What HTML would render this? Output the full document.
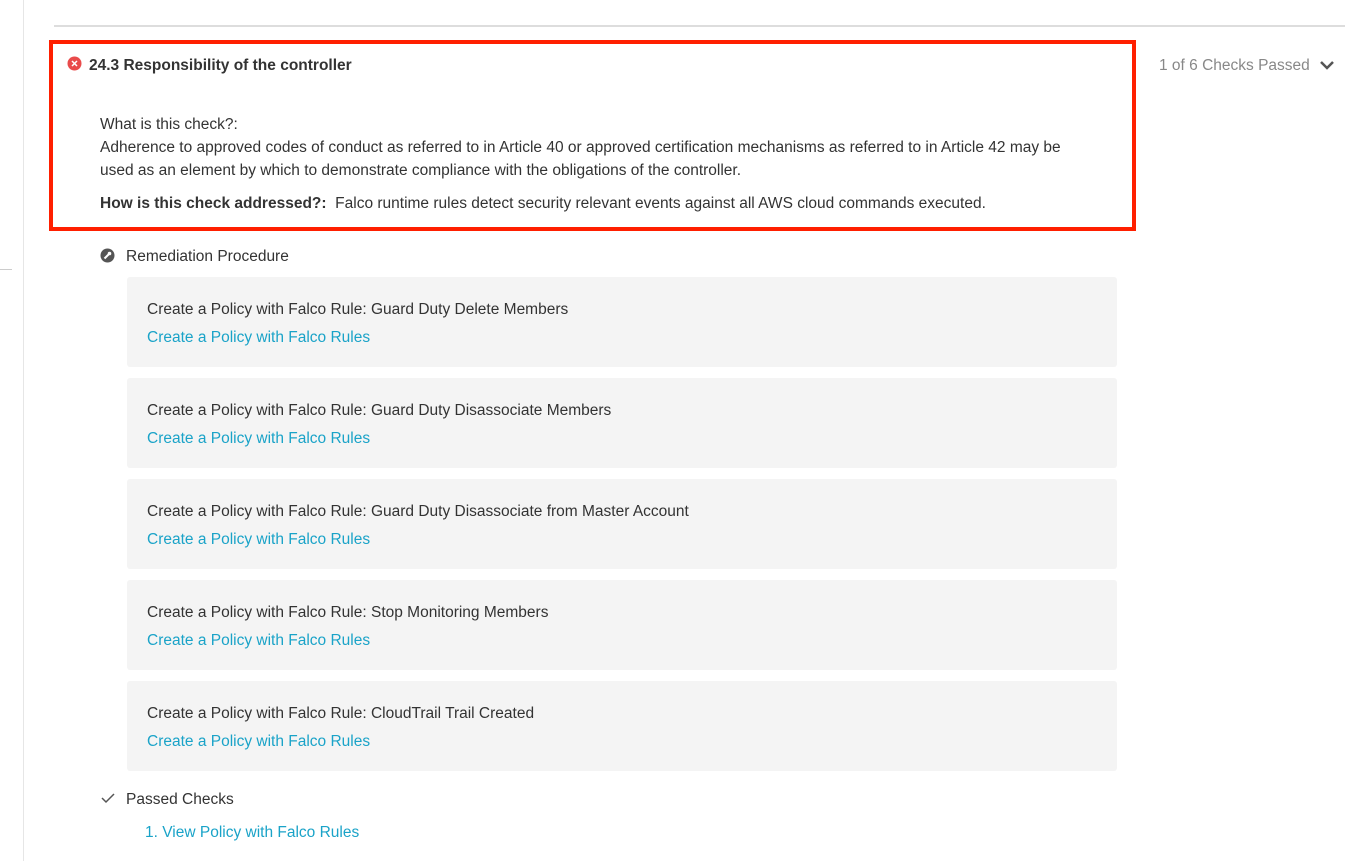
<!DOCTYPE html>
<html><head><style>
body{margin:0;width:1345px;height:861px;background:#fff;font-family:"Liberation Sans",sans-serif;color:#333;position:relative;overflow:hidden;font-size:15.5px}
.a{position:absolute;white-space:nowrap}
.card{position:absolute;left:127px;width:990px;height:90px;background:#f4f4f4;border-radius:3px}
.card .t{position:absolute;left:20px;top:24px;color:#333}
.card .l{position:absolute;left:20px;top:52px;color:#1aa3c8}
</style></head><body>
<div class="a" style="left:23px;top:0;width:1px;height:861px;background:#e6e6e6"></div>
<div class="a" style="left:0;top:269px;width:12px;height:1px;background:#ccc"></div>
<div class="a" style="left:54px;top:25px;width:1291px;height:2px;background:#ddd"></div>
<div class="a" style="left:49px;top:40px;width:1079px;height:183px;border:4px solid #ff1f00"></div>
<svg class="a" style="left:67px;top:56px" width="15" height="15" viewBox="0 0 15 15"><circle cx="7.5" cy="7.5" r="7" fill="#e94b4b"/><path d="M5 5l5 5M10 5l-5 5" stroke="#fff" stroke-width="1.5"/></svg>
<div class="a" style="left:89px;top:57px;font-weight:bold;font-size:15.5px">24.3 Responsibility of the controller</div>
<div class="a" style="left:100px;top:116px">What is this check?:</div>
<div class="a" style="left:100px;top:136px;white-space:normal;width:995px;line-height:23px">Adherence to approved codes of conduct as referred to in Article 40 or approved certification mechanisms as referred to in Article 42 may be used as an element by which to demonstrate compliance with the obligations of the controller.</div>
<div class="a" style="left:100px;top:195px"><b>How is this check addressed?:</b>&nbsp; Falco runtime rules detect security relevant events against all AWS cloud commands executed.</div>
<div class="a" style="left:1159px;top:57px;color:#888">1 of 6 Checks Passed</div>
<svg class="a" style="left:1319px;top:59px" width="16" height="12" viewBox="0 0 16 12"><path d="M2 3l6 6 6-6" stroke="#555" stroke-width="2.5" fill="none"/></svg>
<svg class="a" style="left:100px;top:248px" width="15" height="15" viewBox="0 0 15 15"><circle cx="7.5" cy="7.5" r="7" fill="#555"/><path d="M4.5 10.5l4-4" stroke="#fff" stroke-width="2"/><circle cx="9.5" cy="5.5" r="1.8" fill="#fff"/></svg>
<div class="a" style="left:126px;top:248px">Remediation Procedure</div>
<div class="card" style="top:277px"><div class="t a">Create a Policy with Falco Rule: Guard Duty Delete Members</div><div class="l a">Create a Policy with Falco Rules</div></div>
<div class="card" style="top:378px"><div class="t a">Create a Policy with Falco Rule: Guard Duty Disassociate Members</div><div class="l a">Create a Policy with Falco Rules</div></div>
<div class="card" style="top:479px"><div class="t a">Create a Policy with Falco Rule: Guard Duty Disassociate from Master Account</div><div class="l a">Create a Policy with Falco Rules</div></div>
<div class="card" style="top:580px"><div class="t a">Create a Policy with Falco Rule: Stop Monitoring Members</div><div class="l a">Create a Policy with Falco Rules</div></div>
<div class="card" style="top:681px"><div class="t a">Create a Policy with Falco Rule: CloudTrail Trail Created</div><div class="l a">Create a Policy with Falco Rules</div></div>
<svg class="a" style="left:101px;top:792px" width="14" height="12" viewBox="0 0 14 12"><path d="M1 6l4 4 8-8" stroke="#555" stroke-width="1.5" fill="none"/></svg>
<div class="a" style="left:126px;top:791px">Passed Checks</div>
<div class="a" style="left:145px;top:824px;color:#1aa3c8">1. View Policy with Falco Rules</div>
</body></html>
